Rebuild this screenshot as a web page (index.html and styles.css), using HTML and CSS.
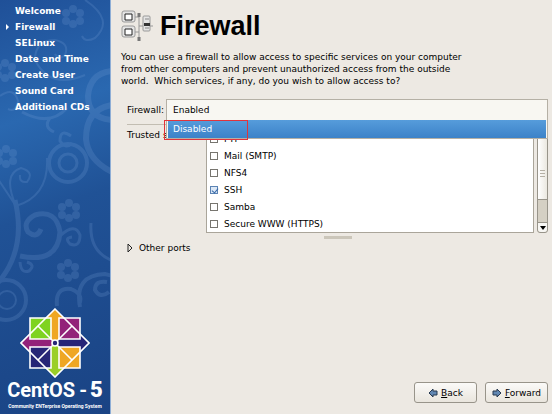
FILE: index.html
```html
<!DOCTYPE html>
<html lang="en">
<head>
<meta charset="UTF-8">
<title>Firewall</title>
<link rel="stylesheet" href="styles.css">
</head>
<body>
  <aside class="sidebar">
    <svg class="pattern" viewBox="0 0 110 414" preserveAspectRatio="xMidYMin slice" fill="none" stroke="#7ea6dc" aria-hidden="true">
      <defs>
        <g id="flower" fill="#7ea6dc" stroke="none">
          <circle cx="0" cy="-7" r="4"/><circle cx="7" cy="-3" r="4"/><circle cx="7" cy="5" r="4"/>
          <circle cx="0" cy="8" r="4"/><circle cx="-7" cy="5" r="4"/><circle cx="-7" cy="-3" r="4"/>
        </g>
      </defs>
      <use href="#flower" x="73" y="16"/>
      <use href="#flower" x="5" y="70"/>
      <use href="#flower" x="6" y="156"/>
      <use href="#flower" x="69" y="210"/>
      <use href="#flower" x="68" y="270"/>
      <path stroke-width="2" d="M85 0q30 20 10 38q-10 5-13-2M35 60q0-20 20-20q15 3 10 15q-6 6-10-1M35 60q15 30 50 15M0 96q14-10 18 5q-2 12-10 8"/>
      <circle cx="68" cy="163" r="19" stroke-width="4"/>
      <circle cx="68" cy="163" r="9" stroke-width="3"/>
      <path stroke-width="6" d="M112 71q-22 2-24 25q0 22 24 24M112 172q-24-12-26-33q0-30 26-34"/>
      <path stroke-width="3" d="M22 112q28 15 45-4M50 118q-7 9 4 14M71 136q-11-8-11 5q6 9 12 2"/>
      <path stroke-width="2" d="M47 158q2 38-31 48Q-4 176-8 170M16 206q-14-32 5-38q14 4 6 14q-8 1-7-7"/>
      <path stroke-width="5" d="M15 200q12 50-18 84M20 256q38 8 40-24q-4-23-25-17q-13 7-7 17q9 7 13-3"/>
      <path stroke-width="3" d="M60 236q15-14 20-1q0 13-10 9q-6-6 2-7M91 223q-2 28 20 37M20 262q1 12 9 9q7-6-2-9"/>
      <circle cx="6" cy="300" r="20" stroke-width="4"/>
      <circle cx="7" cy="300" r="9" stroke-width="2"/>
      <path stroke-width="4" d="M80 307q-6-32 25-33l8 2M57 306q-2-19 14-17q13 5 8 16M107 282q-12-2-12 8q5 9 14 2"/>
    </svg>
    <nav>
      <ul class="steps">
        <li>Welcome</li>
        <li class="current" aria-current="step">Firewall</li>
        <li>SELinux</li>
        <li>Date and Time</li>
        <li>Create User</li>
        <li>Sound Card</li>
        <li>Additional CDs</li>
      </ul>
    </nav>
    <div class="brand">
      <svg class="logo" viewBox="-35 -35 70 70" aria-hidden="true">
        <path fill="#efa724" d="M0 0l-17-17L0-34l17 17z"/>
        <path fill="#262577" d="M0 0l17-17L34 0 17 17z"/>
        <path fill="#9bcf27" d="M0 0l17 17L0 34l-17-17z"/>
        <path fill="#932279" d="M0 0l-17 17L-34 0l17-17z"/>
        <g stroke="#fff" stroke-width="1.6">
          <path fill="#7fd321" d="M-25-25h21v21h-21z"/>
          <path fill="#932279" d="M4-25h21v21H4z"/>
          <path fill="#262577" d="M-25 4h21v21h-21z"/>
          <path fill="#efa724" d="M4 4h21v21H4z"/>
          <path fill="none" d="M0-34L34 0 0 34-34 0z"/>
          <path fill="none" d="M-17-17L17 17M17-17l-34 34"/>
          <circle r="3" fill="#262577"/>
        </g>
      </svg>
      <div class="name">CentOS <span>- <b>5</b></span></div>
      <div class="tagline">Community ENTerprise Operating System</div>
    </div>
  </aside>

  <main>
    <header>
      <svg class="network" viewBox="0 0 32 32" aria-hidden="true">
        <path d="M14 7h4v21M14 22h4M18 16h14" fill="none" stroke="#999"/>
        <path d="M18 3v4M18 27v4" stroke="#777" stroke-width="3"/>
        <g fill="#e4e4e4" stroke="#999">
          <rect x="1" y="1" width="13" height="11" rx="2"/>
          <rect x="1" y="16" width="13" height="11" rx="2"/>
          <rect x="22" y="6" width="7" height="15" rx="1"/>
        </g>
        <path d="M4 4h7v6H4zM4 19h7v6H4z" fill="#fff" stroke="#222"/>
        <path d="M23 13h6v3h-6z" fill="#333"/>
        <path d="M24 9h4M24 18h4" stroke="#888"/>
      </svg>
      <h1>Firewall</h1>
    </header>
    <p class="intro">You can use a firewall to allow access to specific services on your computer from other computers and prevent unauthorized access from the outside world.&nbsp; Which services, if any, do you wish to allow access to?</p>

    <form>
      <div class="combo-row">
        <label for="firewall">Firewall:</label>
        <div class="combo">
          <select id="firewall">
            <option selected>Enabled</option>
            <option>Disabled</option>
          </select>
          <div class="popup" role="listbox" aria-label="Firewall options">
            <div class="option" role="option" aria-selected="true">Disabled</div>
            <div class="highlight"></div>
          </div>
        </div>
      </div>

      <div class="services-row">
        <span class="services-label" id="trusted">Trusted services:</span>
        <div class="services" role="group" aria-labelledby="trusted">
          <label><input type="checkbox">FTP</label>
          <label><input type="checkbox">Mail (SMTP)</label>
          <label><input type="checkbox">NFS4</label>
          <label><input type="checkbox" checked>SSH</label>
          <label><input type="checkbox">Samba</label>
          <label><input type="checkbox">Secure WWW (HTTPS)</label>
        </div>
        <div class="scrollbar">
          <div class="thumb"></div>
          <button type="button" class="scroll-down" aria-label="Scroll down"></button>
        </div>
      </div>
      <div class="grip"></div>

      <details>
        <summary>
          <svg viewBox="0 0 6 10" aria-hidden="true"><path d="M1 1l4 4-4 4z" fill="none" stroke="#222"/></svg>
          Other ports
        </summary>
      </details>
    </form>

    <footer>
      <button type="button">
        <svg viewBox="0 0 10 10" aria-hidden="true"><path d="M1 5l4-4v2h4v4H5v2z" fill="#6187b2" stroke="#26384f"/></svg>
        <span><u>B</u>ack</span>
      </button>
      <button type="button">
        <svg viewBox="0 0 10 10" aria-hidden="true"><path d="M9 5L5 1v2H1v4h4v2z" fill="#6187b2" stroke="#26384f"/></svg>
        <span><u>F</u>orward</span>
      </button>
    </footer>
  </main>
</body>
</html>
```

FILE: styles.css
```css
* {
  box-sizing: border-box;
}

body {
  margin: 0;
  min-height: 100vh;
  display: flex;
  background: #ede9e3;
  color: #000;
  font-family: "DejaVu Sans", sans-serif;
  font-size: 9px;
  line-height: 12px;
}

.sidebar {
  position: relative;
  width: 111px;
  flex: none;
  display: flex;
  flex-direction: column;
  justify-content: space-between;
  overflow: hidden;
  background: linear-gradient(160deg, #1f5098 0%, #2a68b0 28%, #205296 50%, #1a4384 100%);
  border-right: 1px solid #8eaed6;
  color: #fff;
}

.pattern {
  position: absolute;
  inset: 0;
  width: 100%;
  height: 100%;
  opacity: 0.2;
}

nav,
.brand {
  position: relative;
}

.steps {
  list-style: none;
  margin: 0;
  padding: 3px 0 0 15px;
  font-weight: bold;
  line-height: 16px;
  white-space: nowrap;
}

.current::before {
  content: "";
  position: absolute;
  left: 6px;
  margin-top: 5px;
  border: 3px solid transparent;
  border-left-color: #fff;
  border-right: 0;
}

.brand {
  text-align: center;
  white-space: nowrap;
  padding-bottom: 4px;
}

.logo {
  display: block;
  width: 70px;
  margin: 0 auto;
}

.name {
  display: flex;
  justify-content: center;
  align-items: baseline;
  gap: 4px;
  font-family: Roboto, sans-serif;
  font-weight: bold;
  font-size: 20px;
  line-height: 24px;
}

.name b {
  font-size: 22px;
}

.name span {
  display: flex;
  align-items: baseline;
  gap: 3px;
}

.tagline {
  font-family: Roboto, sans-serif;
  font-weight: bold;
  font-size: 5px;
  line-height: 8px;
}

main {
  flex: 1;
  min-width: 0;
  display: flex;
  flex-direction: column;
  padding: 8px 4px 11px 10px;
}

header {
  display: flex;
  align-items: center;
  gap: 7px;
}

.network {
  width: 32px;
  height: 32px;
}

h1 {
  margin: 0;
  font-family: "Liberation Sans", Arial, sans-serif;
  font-size: 27px;
  line-height: 36px;
}

.intro {
  margin: 7px 0 12px;
  max-width: 350px;
}

form {
  padding-left: 6px;
}

.combo-row {
  display: grid;
  grid-template-columns: 39px 1fr;
  align-items: center;
  padding-bottom: 4px;
}

.combo {
  position: relative;
}

select {
  display: block;
  appearance: none;
  width: 100%;
  height: 21px;
  padding: 0 6px;
  border: 1px solid #b5b0a5;
  border-bottom: 0;
  border-radius: 0;
  background: #f8f7f2;
  color: #000;
  font: inherit;
}

.popup {
  position: absolute;
  z-index: 1;
  top: 100%;
  left: 0;
  right: 0;
  padding: 0 1px;
  border: 1px solid #b5b0a5;
  border-top: 0;
  background: #f8f7f2;
}

.option {
  height: 18px;
  padding-left: 5px;
  line-height: 18px;
  color: #fff;
  background: linear-gradient(#569cdb, #3c82c8);
}

.highlight {
  position: absolute;
  top: 0;
  left: -3px;
  width: 84px;
  height: 20px;
  border: 1px solid #e0343c;
}

.services-row {
  display: grid;
  grid-template-columns: 79px 1fr 11px;
  border-top: 1px solid #c2bdb2;
}

.services-label {
  padding-top: 4px;
  white-space: nowrap;
}

.services {
  height: 108px;
  display: flex;
  flex-direction: column;
  justify-content: flex-end;
  overflow: hidden;
  margin-right: 3px;
  background: #fff;
  border: 1px solid #aaa59a;
}

.services label {
  flex: none;
  height: 17px;
  display: flex;
  align-items: center;
  gap: 6px;
  padding-left: 3px;
}

.services input {
  appearance: none;
  width: 8px;
  height: 8px;
  margin: 0;
  border: 1px solid #77756f;
  background: #fff;
}

.services input:checked {
  border-color: #5c84b4;
  background: #dce8f6;
}

.services input:checked::before {
  content: "";
  display: block;
  width: 3px;
  height: 5px;
  margin-left: 2px;
  border: solid #3568a8;
  border-width: 0 1px 1px 0;
  transform: rotate(40deg);
}

.scrollbar {
  display: flex;
  flex-direction: column;
  justify-content: space-between;
  background: #d5d0c4;
  border: 1px solid #98948a;
  border-radius: 0 0 3px 3px;
}

.thumb {
  height: 74px;
  background:
    repeating-linear-gradient(#b5b0a5 0 1px, transparent 1px 3px) center 44px / 5px 7px no-repeat,
    linear-gradient(90deg, #fff, #ebe8e0);
  border-bottom: 1px solid #98948a;
}

.scroll-down {
  height: 10px;
  padding: 0;
  border: 0;
  border-top: 1px solid #98948a;
  border-radius: 0 0 3px 3px;
  background: #f8f7f4;
}

.scroll-down::before {
  content: "";
  display: block;
  width: 0;
  margin: 0 auto;
  border: 3px solid transparent;
  border-top: 4px solid #000;
  border-bottom: 0;
}

.grip {
  width: 28px;
  height: 3px;
  margin: 3px auto;
  background: #cbc6ba;
}

summary {
  display: flex;
  align-items: center;
  gap: 6px;
  list-style: none;
}

summary svg {
  width: 6px;
  height: 10px;
}

footer {
  display: flex;
  justify-content: flex-end;
  gap: 8px;
  margin-top: auto;
}

footer button {
  width: 63px;
  height: 21px;
  display: flex;
  align-items: center;
  justify-content: center;
  gap: 3px;
  padding: 0;
  border: 1px solid #98948a;
  border-radius: 3px;
  background: linear-gradient(#fbfaf8, #e9e5dd);
  color: #000;
  font: inherit;
}

footer svg {
  width: 10px;
  height: 10px;
}
```
